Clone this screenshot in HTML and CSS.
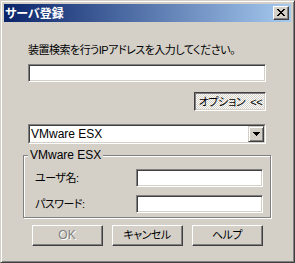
FILE: index.html
```html
<!DOCTYPE html>
<html lang="ja">

<head>
    <meta charset="UTF-8" />
    <title>サーバ登録</title>
    <link rel="stylesheet" href="styles.css">
</head>

<body>
    <div class="window" role="dialog" aria-label="サーバ登録">
        <div class="titlebar">
            <span class="title">サーバ登録</span>
            <button class="close-btn" aria-label="閉じる">
                <svg width="8" height="7" viewBox="0 0 8 7" shape-rendering="crispEdges">
                    <path d="M0 0h2v1h-2z M6 0h2v1h-2z M1 1h2v1h-2z M5 1h2v1h-2z M2 2h4v1h-4z M3 3h2v1h-2z M2 4h4v1h-4z M1 5h2v1h-2z M5 5h2v1h-2z M0 6h2v1h-2z M6 6h2v1h-2z" fill="#000" />
                </svg>
            </button>
        </div>

        <div class="content">
            <p class="prompt">装置検索を行うIPアドレスを入力してください。</p>
            <input type="text" class="field ip-input" aria-label="IPアドレス" />

            <div class="option-row">
                <button class="btn btn-toggle">オプション &lt;&lt;</button>
            </div>

            <div class="combo">
                <div class="combo-inner">
                    <span class="combo-value">VMware ESX</span>
                    <span class="combo-arrow">
                        <svg width="7" height="4" viewBox="0 0 7 4" shape-rendering="crispEdges">
                            <path d="M0 0h7v1h-7z M1 1h5v1h-5z M2 2h3v1h-3z M3 3h1v1h-1z" fill="#000" />
                        </svg>
                    </span>
                </div>
            </div>

            <fieldset class="group">
                <legend>VMware ESX</legend>
                <div class="group-body">
                    <div class="form-row">
                        <label class="form-label" for="user-input">ユーザ名:</label>
                        <input type="text" class="field form-input" id="user-input" />
                    </div>
                    <div class="form-row">
                        <label class="form-label" for="pass-input">パスワード:</label>
                        <input type="password" class="field form-input" id="pass-input" />
                    </div>
                </div>
            </fieldset>

            <div class="actions">
                <button class="btn btn-ok" disabled>OK</button>
                <button class="btn">キャンセル</button>
                <button class="btn">ヘルプ</button>
            </div>
        </div>
    </div>
</body>

</html>
```

FILE: styles.css
```css
/* Reset */

* {
    margin: 0;
    padding: 0;
    box-sizing: border-box;
}

body {
    font-family: 'Liberation Sans', 'Noto Sans CJK JP', sans-serif;
    font-size: 11px;
    line-height: 13px;
    font-feature-settings: "palt";
    white-space: nowrap;
    color: #000000;
    background: #d4d0c8;
}

button,
input {
    font: inherit;
    color: inherit;
    outline: none;
}

/* Window frame */

.window {
    width: 295px;
    height: 263px;
    display: flex;
    flex-direction: column;
    background: #d4d0c8;
    border: 1px solid;
    border-color: #d4d0c8 #404040 #404040 #d4d0c8;
    box-shadow: inset 1px 1px #ffffff, inset -1px -1px #808080;
    padding: 3px;
}

.titlebar {
    height: 18px;
    display: flex;
    align-items: center;
    justify-content: space-between;
    padding: 0 2px 0 1px;
    background: linear-gradient(90deg, #0a246a, #a6caf0);
}

.title {
    color: #ffffff;
    font-family: 'Noto Sans CJK JP', sans-serif;
    font-size: 12px;
    font-weight: bold;
    line-height: 18px;
}

.close-btn {
    width: 16px;
    height: 14px;
    display: flex;
    align-items: center;
    justify-content: center;
    padding: 0 1px 1px 0;
    background: #d4d0c8;
    border: 1px solid;
    border-color: #ffffff #404040 #404040 #ffffff;
    box-shadow: inset -1px -1px #808080;
}

.close-btn svg {
    display: block;
}

/* Content */

.content {
    flex: 1;
    display: flex;
    flex-direction: column;
    padding: 22px 25px 0 24px;
}

.prompt,
.form-label,
.btn {
    letter-spacing: -0.5px;
}

.field {
    height: 18px;
    background: #ffffff;
    border: 1px solid;
    border-color: #808080 #ffffff #ffffff #808080;
    box-shadow: inset 1px 1px #404040, inset -1px -1px #d4d0c8;
    padding: 0 3px;
}

.ip-input {
    width: 100%;
    margin-top: 7px;
}

.option-row {
    display: flex;
    justify-content: flex-end;
    margin-top: 10px;
}

.btn {
    height: 21px;
    width: 71px;
    background: #d4d0c8;
    border: 1px solid;
    border-color: #ffffff #404040 #404040 #ffffff;
    box-shadow: inset -1px -1px #808080;
    text-align: center;
    cursor: pointer;
}

.btn-ok {
    font-size: 12px;
    letter-spacing: 0;
}

.btn:disabled {
    color: #808080;
    text-shadow: 1px 1px #ffffff;
    cursor: default;
}

.btn-toggle {
    width: 72px;
    height: 19px;
    padding: 1px 0 0 1px;
    letter-spacing: -0.3px;
    word-spacing: 2px;
    border-color: #404040 #ffffff #ffffff #404040;
    box-shadow: inset 1px 1px #808080, inset -1px -1px #d4d0c8;
    background: repeating-conic-gradient(#ffffff 0 25%, #d4d0c8 0 50%) 0 0 / 2px 2px;
}

/* Combo box */

.combo {
    height: 20px;
    margin-top: 13px;
    border: 1px solid;
    border-color: #808080 #ffffff #ffffff #808080;
}

.combo-inner {
    height: 100%;
    display: flex;
    align-items: center;
    justify-content: space-between;
    background: #ffffff;
    border: 1px solid;
    border-color: #404040 #d4d0c8 #d4d0c8 #404040;
    padding-left: 1px;
}

.combo-value {
    font-size: 12px;
}

.combo-arrow {
    width: 16px;
    height: 16px;
    display: flex;
    align-items: center;
    justify-content: center;
    background: #d4d0c8;
    border: 1px solid;
    border-color: #d4d0c8 #404040 #404040 #d4d0c8;
    box-shadow: inset 1px 1px #ffffff, inset -1px -1px #808080;
}

.combo-arrow svg {
    display: block;
}

/* Group box */

.group {
    margin: 5px -5px 0;
    padding: 0 4px;
    border: 1px solid #808080;
    box-shadow: inset 1px 1px #ffffff, 1px 1px #ffffff;
}

.group legend {
    padding: 0 2px;
    font-size: 12px;
    line-height: 13px;
    background: #d4d0c8;
}

.group-body {
    padding: 7px 3px 4px 7px;
}

.form-row {
    display: flex;
    align-items: center;
}

.form-row + .form-row {
    margin-top: 8px;
}

.form-label {
    flex: 1;
}

.form-input {
    width: 127px;
}

/* Buttons */

.actions {
    display: flex;
    justify-content: center;
    gap: 9px;
    margin-top: 7px;
}
```
